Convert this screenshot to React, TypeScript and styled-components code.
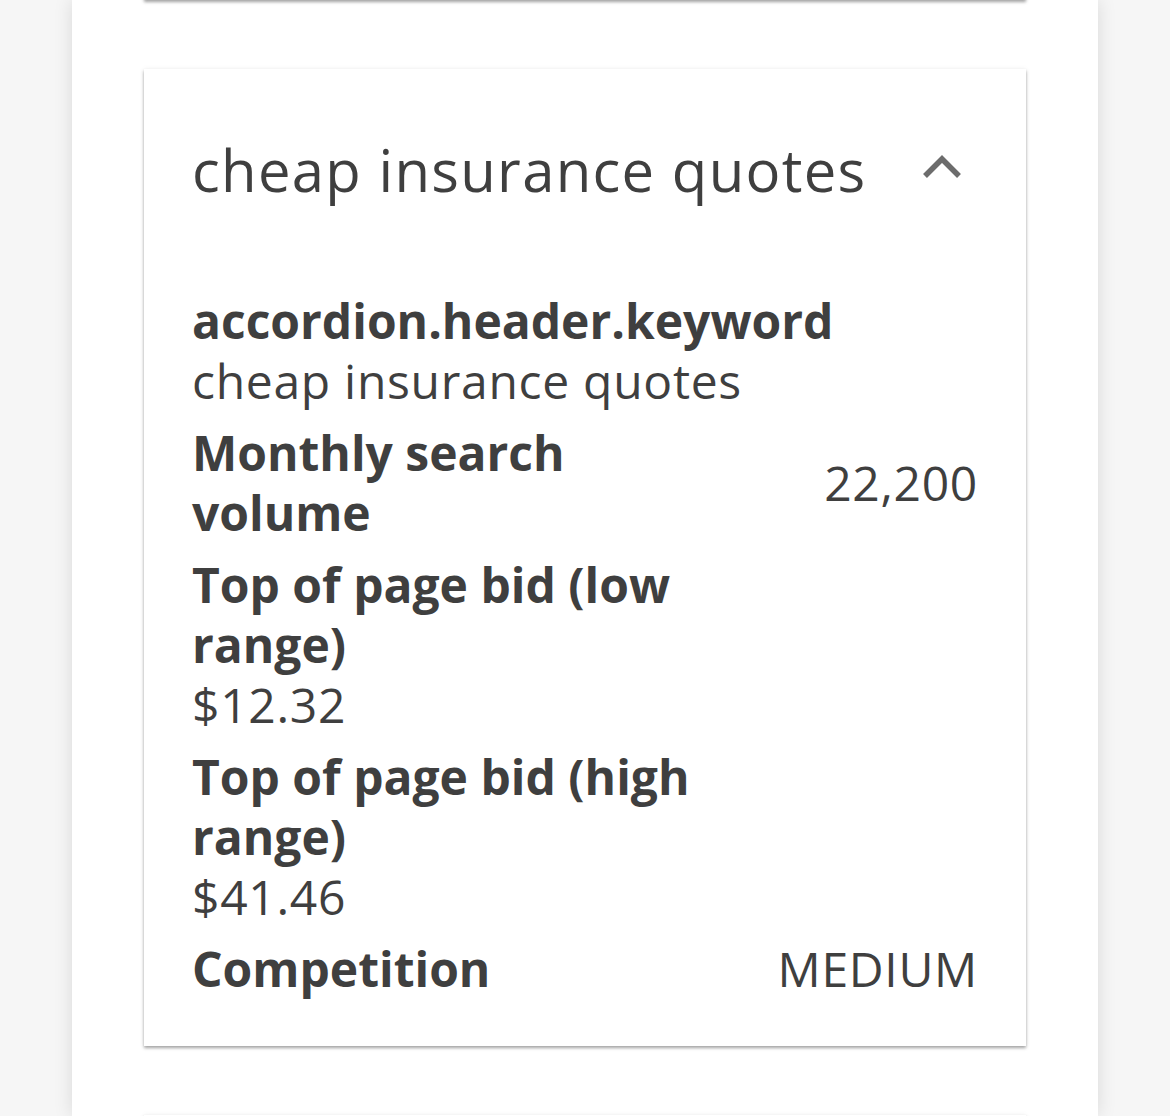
import styled, { createGlobalStyle } from "styled-components";

const GlobalStyle = createGlobalStyle`
  html, body {
    margin: 0;
    padding: 0;
    background: #f6f6f6;
  }
  body {
    font-family: "Open Sans", "Liberation Sans", sans-serif;
    color: #3f3f3f;
  }
`;

type Metric = {
  label: string;
  value: string;
  stacked?: boolean;
};

const metrics: Metric[] = [
  { label: "accordion.header.keyword", value: "cheap insurance quotes", stacked: true },
  { label: "Monthly search volume", value: "22,200" },
  { label: "Top of page bid (low range)", value: "$12.32", stacked: true },
  { label: "Top of page bid (high range)", value: "$41.46", stacked: true },
  { label: "Competition", value: "MEDIUM" },
];

const Panel = styled.main`
  width: 1026px;
  height: 1116px;
  margin-left: 72px;
  box-sizing: border-box;
  padding: 0 72px;
  background: #fff;
  box-shadow: 0 0 18px rgba(0, 0, 0, 0.12);
  overflow: hidden;
`;

/* list is scrolled so the previous card just ends at the top edge */
const CardList = styled.div`
  display: flex;
  flex-direction: column;
  gap: 69px;
  margin-top: -200px;
`;

const Card = styled.section<{ $collapsed?: boolean }>`
  background: #fff;
  box-shadow: 0 2px 3px rgba(0, 0, 0, 0.35), 0 0 6px rgba(0, 0, 0, 0.05);
  min-height: ${(p) => (p.$collapsed ? "200px" : "auto")};
`;

const Header = styled.div`
  height: 200px;
  display: flex;
  align-items: center;
  justify-content: space-between;
  padding: 0 48px;
`;

const Title = styled.h2`
  margin: 0;
  font-size: 58px;
  font-weight: 400;
  letter-spacing: 1.3px;
  color: #3f3f3f;
`;

const Chevron = styled.svg`
  width: 40px;
  height: 28px;
  margin-right: 16px;
  color: #6c6c6c;
`;

const Body = styled.div`
  display: flex;
  flex-direction: column;
  gap: 12px;
  padding: 22px 48px 47px;
`;

const Row = styled.div<{ $stacked?: boolean }>`
  display: flex;
  flex-direction: ${(p) => (p.$stacked ? "column" : "row")};
  justify-content: space-between;
  align-items: ${(p) => (p.$stacked ? "flex-start" : "center")};
  font-size: 48px;
  line-height: 60px;
`;

const Label = styled.div`
  font-weight: 700;
  max-width: 530px;
`;

const Value = styled.div`
  font-weight: 400;
  letter-spacing: 0.7px;
`;

export default function App() {
  return (
    <>
      <GlobalStyle />
      <Panel>
        <CardList>
          <Card $collapsed />
          <Card>
            <Header>
              <Title>cheap insurance quotes</Title>
              <Chevron viewBox="0 0 40 28" fill="none">
                <path d="M3 21 L20 4 L37 21" stroke="currentColor" strokeWidth="5.5" />
              </Chevron>
            </Header>
            <Body>
              {metrics.map((m) => (
                <Row key={m.label} $stacked={m.stacked}>
                  <Label>{m.label}</Label>
                  <Value>{m.value}</Value>
                </Row>
              ))}
            </Body>
          </Card>
          <Card $collapsed />
        </CardList>
      </Panel>
    </>
  );
}
